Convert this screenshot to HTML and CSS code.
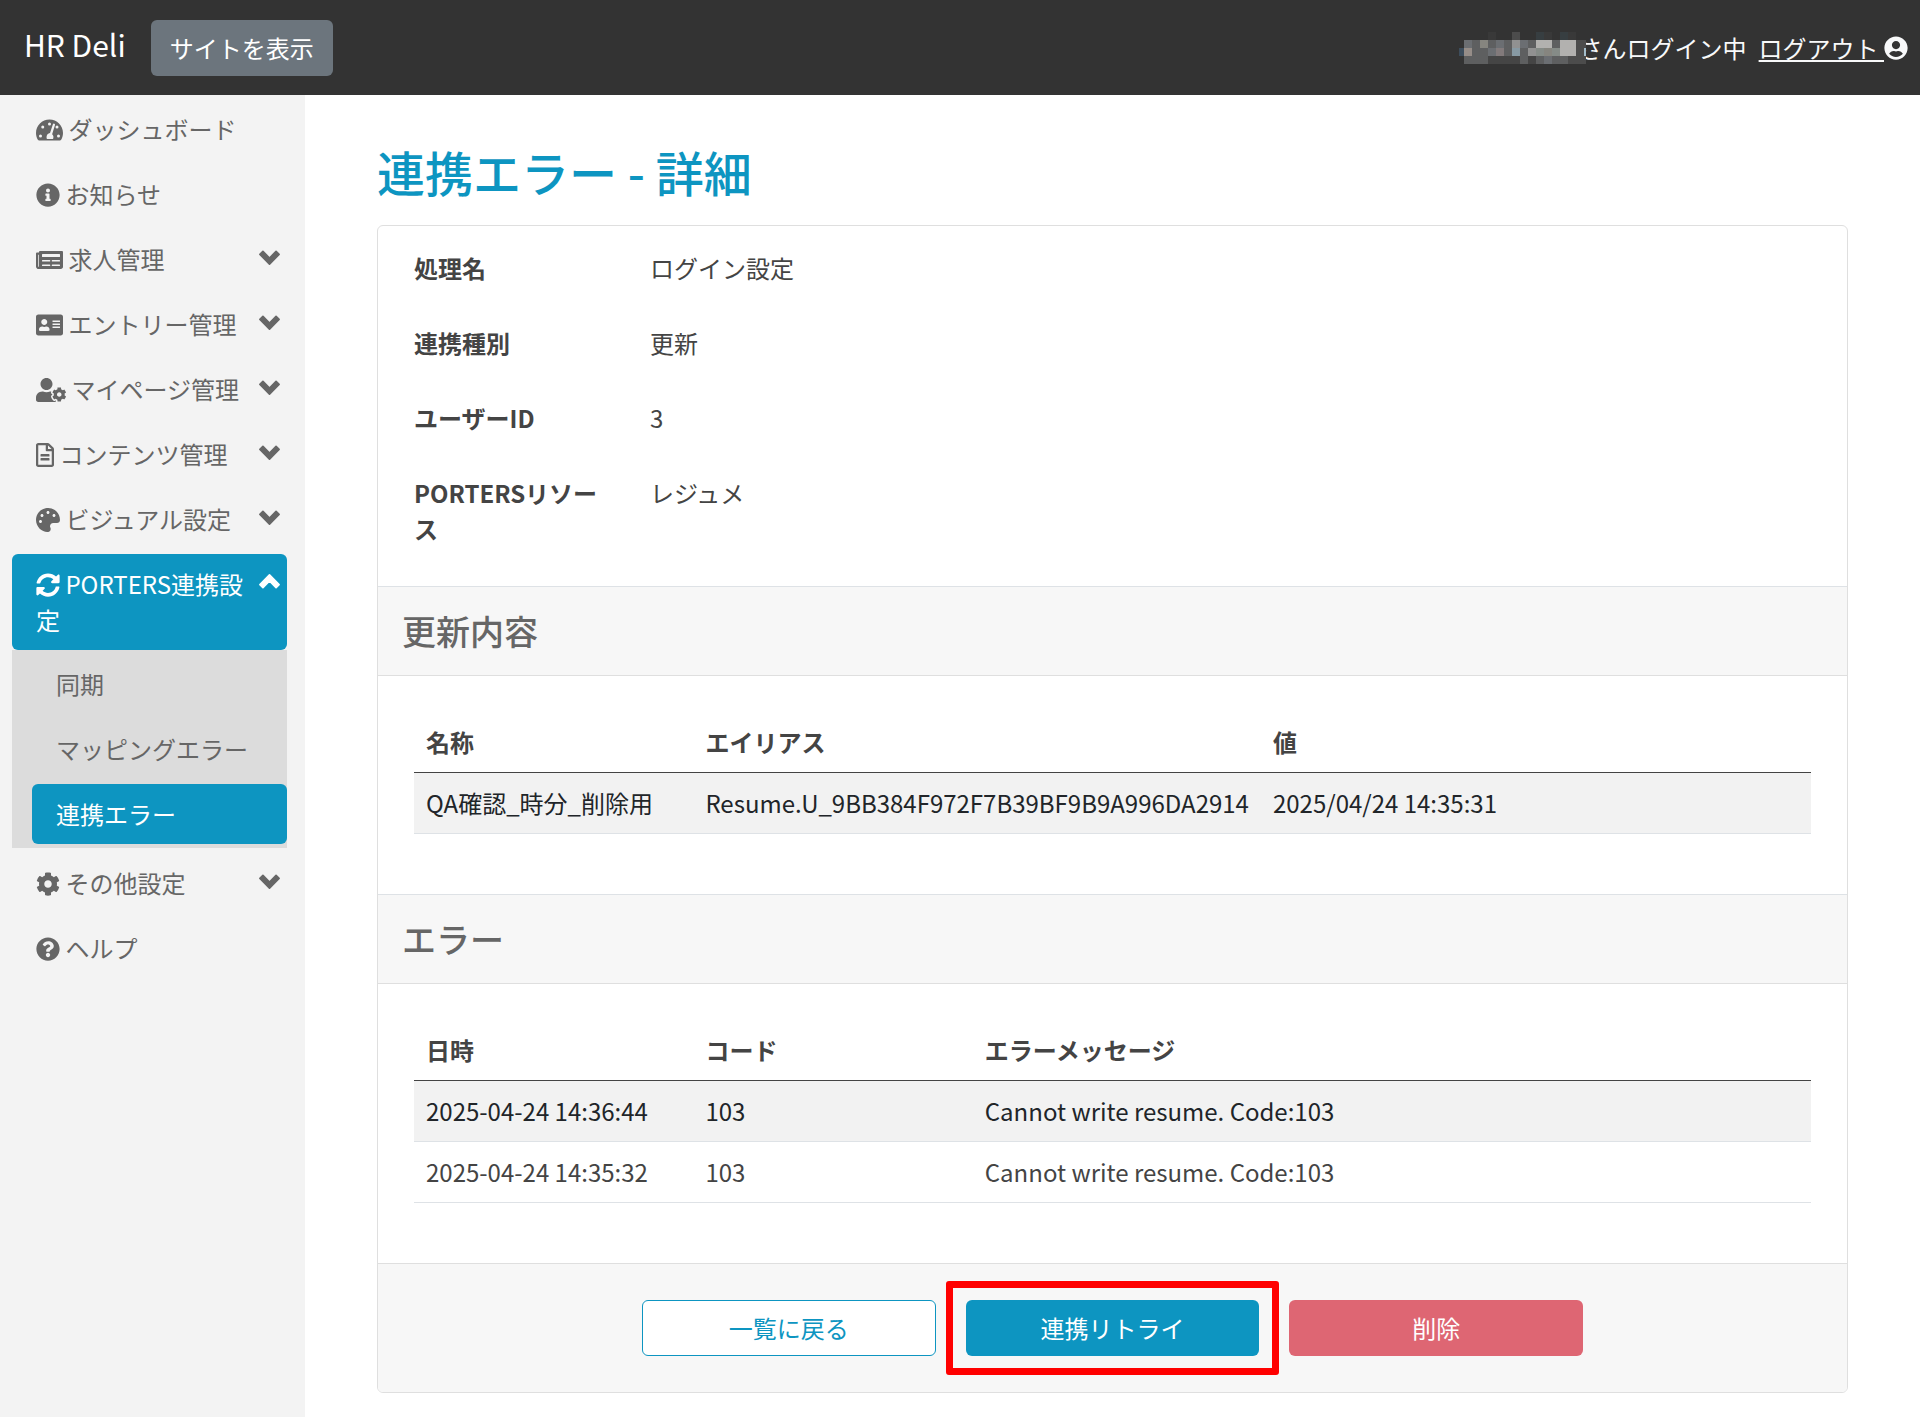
FILE: index.html
```html
<!DOCTYPE html>
<html lang="ja">

<head>
    <meta charset="UTF-8">
    <meta name="viewport" content="width=device-width, initial-scale=1.0">
    <title>連携エラー - 詳細 | HR Deli</title>
    <link rel="stylesheet" href="styles.css">
</head>

<body>
    <!-- icon sprite -->
    <svg class="sprite" aria-hidden="true">
        <symbol id="i-dashboard" viewBox="0 0 576 512"><path fill-rule="evenodd" d="M288 32C128.940 32 0 160.940 0 320c0 52.800 14.250 102.260 39.060 144.800 5.610 9.620 16.300 15.200 27.440 15.200h443c11.140 0 21.830-5.580 27.440-15.200C561.750 422.260 576 372.800 576 320c0-159.060-128.940-288-288-288zM288 96a32 32 0 1 0 0 64 32 32 0 1 0 0-64zM144 160a32 32 0 1 0 0 64 32 32 0 1 0 0-64zM96 352a32 32 0 1 0 0 64 32 32 0 1 0 0-64zM448 160a32 32 0 1 0 0 64 32 32 0 1 0 0-64zM480 352a32 32 0 1 0 0 64 32 32 0 1 0 0-64zM359 137c4-13 17-20 30-16s20 17 16 30l-61 193c29 23 36 63 19 104H233c-22-56 9-120 66-127z"/></symbol>
        <symbol id="i-info" viewBox="0 0 512 512"><path d="M256 8C119.043 8 8 119.083 8 256c0 136.997 111.043 248 248 248s248-111.003 248-248C504 119.083 392.957 8 256 8zm0 110c23.196 0 42 18.804 42 42s-18.804 42-42 42-42-18.804-42-42 18.804-42 42-42zm56 254c0 6.627-5.373 12-12 12h-88c-6.627 0-12-5.373-12-12v-24c0-6.627 5.373-12 12-12h12v-64h-12c-6.627 0-12-5.373-12-12v-24c0-6.627 5.373-12 12-12h64c6.627 0 12 5.373 12 12v100h12c6.627 0 12 5.373 12 12v24z"/></symbol>
        <symbol id="i-news" viewBox="0 0 576 512"><path d="M552 64H88c-13.255 0-24 10.745-24 24v8H24c-13.255 0-24 10.745-24 24v272c0 30.928 25.072 56 56 56h472c26.510 0 48-21.490 48-48V88c0-13.255-10.745-24-24-24zM56 400a8 8 0 0 1-8-8V144h16v248a8 8 0 0 1-8 8zm236-16H140c-6.627 0-12-5.373-12-12v-8c0-6.627 5.373-12 12-12h152c6.627 0 12 5.373 12 12v8c0 6.627-5.373 12-12 12zm208 0H348c-6.627 0-12-5.373-12-12v-8c0-6.627 5.373-12 12-12h152c6.627 0 12 5.373 12 12v8c0 6.627-5.373 12-12 12zm-208-96H140c-6.627 0-12-5.373-12-12v-8c0-6.627 5.373-12 12-12h152c6.627 0 12 5.373 12 12v8c0 6.627-5.373 12-12 12zm208 0H348c-6.627 0-12-5.373-12-12v-8c0-6.627 5.373-12 12-12h152c6.627 0 12 5.373 12 12v8c0 6.627-5.373 12-12 12zm0-96H140c-6.627 0-12-5.373-12-12v-40c0-6.627 5.373-12 12-12h360c6.627 0 12 5.373 12 12v40c0 6.627-5.373 12-12 12z"/></symbol>
        <symbol id="i-card" viewBox="0 0 576 512"><path d="M528 32H48C21.500 32 0 53.500 0 80v352c0 26.500 21.500 48 48 48h480c26.500 0 48-21.500 48-48V80c0-26.500-21.500-48-48-48zm-352 96c35.300 0 64 28.700 64 64s-28.700 64-64 64-64-28.700-64-64 28.700-64 64-64zm112 236.800c0 10.600-10 19.200-22.400 19.200H86.400C74 384 64 375.400 64 364.800v-19.200c0-31.800 30.100-57.600 67.200-57.600h5c12.300 5.100 25.700 8 39.800 8s27.600-2.900 39.800-8h5c37.100 0 67.200 25.800 67.200 57.600v19.200zM512 312c0 4.400-3.600 8-8 8H360c-4.400 0-8-3.600-8-8v-16c0-4.400 3.600-8 8-8h144c4.400 0 8 3.600 8 8v16zm0-64c0 4.400-3.600 8-8 8H360c-4.400 0-8-3.600-8-8v-16c0-4.400 3.600-8 8-8h144c4.400 0 8 3.600 8 8v16zm0-64c0 4.400-3.600 8-8 8H360c-4.400 0-8-3.600-8-8v-16c0-4.400 3.600-8 8-8h144c4.400 0 8 3.600 8 8v16z"/></symbol>
        <symbol id="i-user-cog" viewBox="0 0 640 512"><path d="M610.500 373.300c2.600-14.100 2.600-28.500 0-42.600l25.800-14.900c3-1.700 4.300-5.200 3.300-8.500-6.700-21.600-18.200-41.200-33.200-57.400-2.300-2.500-6-3.100-9-1.400l-25.800 14.900c-10.900-9.300-23.400-16.500-36.900-21.300v-29.800c0-3.400-2.400-6.400-5.700-7.100-22.300-5-45-4.800-66.200 0-3.300.7-5.700 3.700-5.700 7.100v29.800c-13.500 4.800-26 12-36.900 21.300l-25.800-14.900c-2.900-1.700-6.700-1.100-9 1.400-15 16.200-26.500 35.800-33.200 57.400-1 3.300.4 6.800 3.300 8.500l25.800 14.900c-2.600 14.100-2.600 28.500 0 42.600l-25.800 14.900c-3 1.700-4.300 5.200-3.300 8.500 6.700 21.600 18.200 41.100 33.200 57.400 2.300 2.500 6 3.100 9 1.400l25.800-14.900c10.900 9.300 23.400 16.500 36.900 21.300v29.800c0 3.400 2.400 6.400 5.700 7.100 22.300 5 45 4.800 66.200 0 3.300-.7 5.700-3.700 5.700-7.100v-29.800c13.500-4.800 26-12 36.900-21.300l25.800 14.900c2.900 1.700 6.700 1.100 9-1.400 15-16.200 26.500-35.800 33.200-57.400 1-3.300-.4-6.800-3.300-8.500l-25.800-14.900zM496 400.500c-26.800 0-48.500-21.800-48.500-48.500s21.800-48.500 48.500-48.500 48.500 21.800 48.500 48.500-21.700 48.500-48.500 48.500zM224 256c70.700 0 128-57.300 128-128S294.700 0 224 0 96 57.300 96 128s57.300 128 128 128zm201.200 226.500c-2.300-1.200-4.600-2.600-6.800-3.900l-7.900 4.600c-6 3.400-12.800 5.300-19.600 5.300-10.900 0-21.400-4.600-28.900-12.600-18.300-19.800-32.300-43.900-40.200-69.600-5.500-17.700 1.900-36.400 17.900-45.700l7.900-4.600c-.1-2.600-.1-5.200 0-7.800l-7.900-4.600c-16-9.200-23.400-28-17.900-45.700.9-2.900 2.200-5.800 3.200-8.700-3.800-.3-7.500-1.200-11.400-1.200h-16.700c-22.200 10.200-46.900 16-72.900 16s-50.600-5.800-72.900-16h-16.700C60.200 288 0 348.200 0 422.400V464c0 26.500 21.500 48 48 48h352c10.100 0 19.500-3.200 27.200-8.500-1.200-3.800-2-7.700-2-11.800v-9.200z"/></symbol>
        <symbol id="i-file" viewBox="0 0 384 512"><path d="M288 248v28c0 6.600-5.400 12-12 12H108c-6.600 0-12-5.400-12-12v-28c0-6.600 5.400-12 12-12h168c6.600 0 12 5.400 12 12zm-12 72H108c-6.600 0-12 5.400-12 12v28c0 6.600 5.400 12 12 12h168c6.600 0 12-5.400 12-12v-28c0-6.600-5.400-12-12-12zm108-188.100V464c0 26.500-21.500 48-48 48H48c-26.500 0-48-21.500-48-48V48C0 21.500 21.500 0 48 0h204.100C264.800 0 277 5.100 286 14.100L369.900 98c9 8.900 14.100 21.200 14.100 33.900zm-128-80V128h76.100L256 51.900zM336 464V176H232c-13.300 0-24-10.700-24-24V48H48v416h288z"/></symbol>
        <symbol id="i-palette" viewBox="0 0 512 512"><path d="M204.300 5C104.900 24.400 24.800 104.300 5.200 203.400c-37 187 131.700 326.400 258.800 306.700 41.200-6.400 61.400-54.600 42.500-91.700-23.100-45.400 9.900-98.400 60.900-98.400h79.700c35.800 0 64.800-29.600 64.900-65.300C511.500 97.100 368.100-26.900 204.300 5zM96 320c-17.700 0-32-14.300-32-32s14.300-32 32-32 32 14.300 32 32-14.300 32-32 32zm32-128c-17.700 0-32-14.300-32-32s14.300-32 32-32 32 14.300 32 32-14.300 32-32 32zm128-64c-17.700 0-32-14.300-32-32s14.300-32 32-32 32 14.300 32 32-14.300 32-32 32zm128 64c-17.700 0-32-14.300-32-32s14.300-32 32-32 32 14.300 32 32-14.300 32-32 32z"/></symbol>
        <symbol id="i-sync" viewBox="0 0 512 512"><path d="M370.720 133.280C339.458 104.008 298.888 87.962 255.848 88c-77.458.068-144.328 53.178-162.791 126.850-1.344 5.363-6.122 9.150-11.651 9.150H24.103c-7.498 0-13.194-6.807-11.807-14.176C33.933 94.924 134.813 8 256 8c66.448 0 126.791 26.136 171.315 68.685L463.030 40.970C478.149 25.851 504 36.559 504 57.941V192c0 13.255-10.745 24-24 24H345.941c-21.382 0-32.090-25.851-16.971-40.971l41.750-41.749zM32 296h134.059c21.382 0 32.090 25.851 16.971 40.971l-41.750 41.750c31.262 29.273 71.835 45.319 114.876 45.280 77.418-.07 144.315-53.144 162.787-126.849 1.344-5.363 6.122-9.150 11.651-9.150h57.304c7.498 0 13.194 6.807 11.807 14.176C478.067 417.076 377.187 504 256 504c-66.448 0-126.791-26.136-171.315-68.685L48.970 471.030C33.851 486.149 8 475.441 8 454.059V320c0-13.255 10.745-24 24-24z"/></symbol>
        <symbol id="i-cog" viewBox="0 0 512 512"><path d="M487.400 315.700l-42.600-24.600c4.300-23.200 4.300-47 0-70.200l42.600-24.600c4.900-2.800 7.100-8.600 5.500-14-11.100-35.600-30-67.800-54.700-94.600-3.800-4.100-10-5.100-14.800-2.300L380.800 110c-17.900-15.400-38.500-27.300-60.800-35.100V25.800c0-5.600-3.900-10.500-9.400-11.700-36.700-8.200-74.300-7.800-109.200 0-5.500 1.200-9.400 6.100-9.400 11.700V75c-22.200 7.900-42.800 19.800-60.800 35.100L88.700 85.500c-4.900-2.800-11-1.900-14.800 2.300-24.700 26.700-43.600 58.900-54.700 94.600-1.700 5.400.6 11.200 5.500 14L67.300 221c-4.300 23.200-4.300 47 0 70.200l-42.600 24.600c-4.900 2.800-7.100 8.600-5.500 14 11.100 35.600 30 67.800 54.700 94.600 3.800 4.100 10 5.100 14.800 2.300l42.600-24.600c17.900 15.400 38.500 27.300 60.800 35.100v49.200c0 5.600 3.900 10.500 9.400 11.700 36.700 8.200 74.300 7.800 109.200 0 5.500-1.200 9.400-6.100 9.400-11.700v-49.200c22.200-7.900 42.800-19.800 60.800-35.100l42.600 24.600c4.900 2.800 11 1.900 14.800-2.300 24.700-26.700 43.600-58.900 54.700-94.600 1.500-5.500-.7-11.300-5.600-14.100zM256 336c-44.100 0-80-35.900-80-80s35.900-80 80-80 80 35.900 80 80-35.900 80-80 80z"/></symbol>
        <symbol id="i-question" viewBox="0 0 512 512"><path d="M504 256c0 136.997-111.043 248-248 248S8 392.997 8 256C8 119.083 119.043 8 256 8s248 111.083 248 248zM262.655 90c-54.497 0-89.255 22.957-116.549 63.758-3.536 5.286-2.353 12.415 2.715 16.258l34.699 26.310c5.205 3.947 12.621 3.008 16.665-2.122 17.864-22.658 30.113-35.797 57.303-35.797 20.429 0 45.698 13.148 45.698 32.958 0 14.976-12.363 22.667-32.534 33.976C247.128 238.528 216 254.941 216 296v4c0 6.627 5.373 12 12 12h56c6.627 0 12-5.373 12-12v-1.333c0-28.462 83.186-29.647 83.186-106.667 0-58.002-60.165-102-116.531-102zM256 338c-25.365 0-46 20.635-46 46 0 25.364 20.635 46 46 46s46-20.636 46-46c0-25.365-20.635-46-46-46z"/></symbol>
        <symbol id="i-user" viewBox="0 0 496 512"><path d="M248 8C111 8 0 119 0 256s111 248 248 248 248-111 248-248S385 8 248 8zm0 96c48.600 0 88 39.400 88 88s-39.400 88-88 88-88-39.400-88-88 39.400-88 88-88zm0 344c-58.700 0-111.300-26.600-146.500-68.200 18.800-35.400 55.600-59.800 98.500-59.800 2.400 0 4.800.4 7.100 1.100 13 4.200 26.600 6.900 40.900 6.900 14.300 0 28-2.700 40.900-6.900 2.300-.7 4.700-1.100 7.100-1.100 42.900 0 79.700 24.400 98.500 59.800C359.300 421.400 306.700 448 248 448z"/></symbol>
        <symbol id="i-chevron" viewBox="0 0 448 512"><path stroke="currentColor" stroke-width="36" stroke-linejoin="round" d="M224 406L20 202l64-64 140 140 140-140 64 64z"/></symbol>
    </svg>

    <header class="topbar">
        <a class="brand" href="#">HR Deli</a>
        <a class="btn btn-secondary" href="#">サイトを表示</a>
        <div class="account">
            <!-- hidden user name -->
            <svg class="mosaic" viewBox="0 0 127 32" aria-hidden="true">
                <path fill="#5e5f60" d="M5 8h122v24H5z"/>
                <path fill="#3d4d5c" d="M0 16h5v8H0z"/>
                <path fill="#393939" d="M29 0h8v8h-8zM85 0h8v8h-8zM109 0h8v8h-8z"/>
                <path fill="#4c4c4c" d="M53 0h8v8h-8zM69 16h8v8h-8zM117 8h10v8h-10zM117 16h8v8h-8zM109 24h18v8h-18z"/>
                <path fill="#373e41" d="M77 0h8v8h-8zM101 0h8v8h-8z"/>
                <path fill="#6b6e72" d="M5 8h8v8H5zM37 8h8v8h-8zM61 8h8v8h-8zM29 16h8v8h-8zM85 24h8v8h-8z"/>
                <path fill="#454545" d="M29 24h32v8H29zM69 24h8v8h-8z"/>
                <path fill="#86857f" d="M21 8h8v8h-8zM85 16h8v8h-8z"/>
                <path fill="#919191" d="M53 8h8v8h-8zM69 16h8v8h-8z"/>
                <path fill="#968d88" d="M5 16h8v8H5z"/>
                <path fill="#827a7b" d="M37 16h8v8h-8z"/>
                <path fill="#8799a3" d="M53 16h8v8h-8z"/>
                <path fill="#b2b1af" d="M77 8h16v8H77zM101 8h16v8h-16zM101 16h16v8h-16z"/>
                <path fill="#858b87" d="M77 16h8v8h-8zM93 16h8v8h-8z"/>
                <path fill="#a4bdca" d="M125 16h2v8h-2z"/>
            </svg><span class="account-name">さんログイン中</span>
            <a class="logout" href="#">ログアウト&nbsp;</a><svg class="icon icon-user"><use href="#i-user"/></svg>
        </div>
    </header>

    <div class="layout">
        <nav class="sidebar">
            <ul class="menu">
                <li><a class="menu-link" href="#"><span class="menu-label"><svg class="icon icon-wide"><use href="#i-dashboard"/></svg> ダッシュボード</span></a></li>
                <li><a class="menu-link" href="#"><span class="menu-label"><svg class="icon"><use href="#i-info"/></svg> お知らせ</span></a></li>
                <li><a class="menu-link" href="#"><span class="menu-label"><svg class="icon icon-wide"><use href="#i-news"/></svg> 求人管理</span><svg class="chevron"><use href="#i-chevron"/></svg></a></li>
                <li><a class="menu-link" href="#"><span class="menu-label"><svg class="icon icon-wide"><use href="#i-card"/></svg> エントリー管理</span><svg class="chevron"><use href="#i-chevron"/></svg></a></li>
                <li><a class="menu-link" href="#"><span class="menu-label"><svg class="icon icon-xwide"><use href="#i-user-cog"/></svg> マイページ管理</span><svg class="chevron"><use href="#i-chevron"/></svg></a></li>
                <li><a class="menu-link" href="#"><span class="menu-label"><svg class="icon icon-narrow"><use href="#i-file"/></svg> コンテンツ管理</span><svg class="chevron"><use href="#i-chevron"/></svg></a></li>
                <li><a class="menu-link" href="#"><span class="menu-label"><svg class="icon"><use href="#i-palette"/></svg> ビジュアル設定</span><svg class="chevron"><use href="#i-chevron"/></svg></a></li>
                <li>
                    <a class="menu-link active" href="#"><span class="menu-label"><svg class="icon"><use href="#i-sync"/></svg> PORTERS連携設定</span><svg class="chevron chevron-up"><use href="#i-chevron"/></svg></a>
                    <ul class="submenu">
                        <li><a class="menu-link" href="#">同期</a></li>
                        <li><a class="menu-link" href="#">マッピングエラー</a></li>
                        <li><a class="menu-link active" href="#">連携エラー</a></li>
                    </ul>
                </li>
                <li><a class="menu-link" href="#"><span class="menu-label"><svg class="icon"><use href="#i-cog"/></svg> その他設定</span><svg class="chevron"><use href="#i-chevron"/></svg></a></li>
                <li><a class="menu-link" href="#"><span class="menu-label"><svg class="icon"><use href="#i-question"/></svg> ヘルプ</span></a></li>
            </ul>
        </nav>

        <main class="content">
            <h1>連携エラー - 詳細</h1>

            <div class="card">
                <dl class="details">
                    <dt>処理名</dt>
                    <dd>ログイン設定</dd>
                    <dt>連携種別</dt>
                    <dd>更新</dd>
                    <dt>ユーザーID</dt>
                    <dd>3</dd>
                    <dt>PORTERSリソース</dt>
                    <dd>レジュメ</dd>
                </dl>

                <h2 class="card-heading">更新内容</h2>
                <div class="card-body">
                    <table>
                        <thead>
                            <tr>
                                <th class="col-fifth">名称</th>
                                <th class="col-fifth">エイリアス</th>
                                <th>値</th>
                            </tr>
                        </thead>
                        <tbody>
                            <tr>
                                <td>QA確認_時分_削除用</td>
                                <td>Resume.U_9BB384F972F7B39BF9B9A996DA2914</td>
                                <td>2025/04/24 14:35:31</td>
                            </tr>
                        </tbody>
                    </table>
                </div>

                <h2 class="card-heading">エラー</h2>
                <div class="card-body">
                    <table>
                        <thead>
                            <tr>
                                <th class="col-fifth">日時</th>
                                <th class="col-fifth">コード</th>
                                <th>エラーメッセージ</th>
                            </tr>
                        </thead>
                        <tbody>
                            <tr>
                                <td>2025-04-24 14:36:44</td>
                                <td>103</td>
                                <td>Cannot write resume. Code:103</td>
                            </tr>
                            <tr>
                                <td>2025-04-24 14:35:32</td>
                                <td>103</td>
                                <td>Cannot write resume. Code:103</td>
                            </tr>
                        </tbody>
                    </table>
                </div>

                <div class="card-footer">
                    <a class="btn btn-outline" href="#">一覧に戻る</a>
                    <button type="button" class="btn btn-primary highlight">連携リトライ</button>
                    <button type="button" class="btn btn-danger">削除</button>
                </div>
            </div>
        </main>
    </div>
</body>

</html>
```
FILE: styles.css
```css
* {
    box-sizing: border-box;
}

body {
    margin: 0;
    min-height: 100vh;
    display: flex;
    flex-direction: column;
    font-family: "Noto Sans CJK JP", "Noto Sans", sans-serif;
    font-size: 24px;
    line-height: 36px;
    color: #444444;
    background-color: #ffffff;
}

ul {
    list-style: none;
    margin: 0;
    padding: 0;
}

a {
    text-decoration: none;
}

.sprite {
    display: none;
}

.icon {
    width: 24px;
    height: 24px;
    fill: currentColor;
    vertical-align: -3px;
}

.icon-narrow {
    width: 18px;
}

.icon-wide {
    width: 27px;
}

.icon-xwide {
    width: 30px;
}

/* buttons */
.btn {
    display: inline-block;
    padding: 9px 18px;
    border: 1px solid transparent;
    border-radius: 6px;
    font-family: inherit;
    font-size: 24px;
    line-height: 36px;
    text-align: center;
    color: #ffffff;
    cursor: pointer;
}

.btn-secondary {
    background-color: #6c757d;
}

.btn-primary {
    background-color: #0d95c1;
}

.btn-danger {
    background-color: #de6673;
}

.btn-outline {
    background-color: #ffffff;
    border-color: #0d95c1;
    color: #0d95c1;
}

/* header */
.topbar {
    display: flex;
    align-items: center;
    gap: 25px;
    padding: 20px 12px 19px 24px;
    background-color: #333333;
    color: #f8f9fa;
}

.brand {
    padding-bottom: 9px;
    font-size: 30px;
    color: #ffffff;
}

.account {
    display: flex;
    align-items: center;
    margin-left: auto;
}

.mosaic {
    position: relative;
    z-index: 1;
    width: 127px;
    height: 32px;
    margin-right: -7px;
}

.logout {
    margin-left: 12px;
    color: #f8f9fa;
    text-decoration: underline;
}

/* layout */
.layout {
    display: flex;
    flex: 1;
}

.sidebar {
    flex: 0 0 305px;
    padding: 4px 18px 24px 12px;
    background-color: #f3f3f3;
}

.menu {
    display: flex;
    flex-direction: column;
    gap: 5px;
}

.menu-link {
    display: flex;
    padding: 12px 7px 12px 24px;
    border-radius: 6px;
    color: #666666;
}

.menu-label {
    flex: 1;
}

.menu-link.active {
    background-color: #0d95c1;
    color: #ffffff;
}

.submenu {
    display: flex;
    flex-direction: column;
    gap: 5px;
    padding: 4px 0 4px 20px;
    background-color: #dcdcdc;
}

.chevron {
    width: 21px;
    height: 24px;
    margin-top: 4px;
    fill: currentColor;
}

.chevron-up {
    transform: rotate(180deg);
}

.content {
    flex: 1;
    min-width: 0;
    padding: 47px 72px 24px;
}

h1 {
    margin: 0 0 25px;
    font-size: 48px;
    font-weight: 500;
    line-height: 58px;
    color: #0d95c1;
}

/* card */
.card {
    border: 1px solid #dfdfdf;
    border-radius: 6px;
    overflow: hidden;
}

.details {
    display: grid;
    grid-template-columns: 200px 1fr;
    gap: 39px 36px;
    margin: 0;
    padding: 24px 36px 39px;
}

dt {
    font-weight: bold;
}

dd {
    margin: 0;
}

.card-heading {
    margin: 0;
    padding: 24px;
    border-top: 1px solid #dee2e6;
    border-bottom: 1px solid #dfdfdf;
    background-color: #f7f7f7;
    font-size: 34px;
    font-weight: 500;
    line-height: 40px;
    color: #666666;
}

.card-body {
    padding: 36px 36px 60px;
}

table {
    width: 100%;
    border-collapse: collapse;
}

th,
td {
    padding: 12px;
    text-align: left;
    border-bottom: 1px solid #dee2e6;
}

th {
    border-bottom-color: #444444;
}

.col-fifth {
    width: 20%;
}

tbody tr:nth-child(odd) {
    background-color: #f2f2f2;
    color: #212529;
}

.card-footer {
    display: flex;
    justify-content: center;
    gap: 30px;
    padding: 36px 0;
    border-top: 1px solid #dfdfdf;
    background-color: #f7f7f7;
}

.card-footer .btn {
    flex: 0 0 20%;
}

.highlight {
    position: relative;
}

/* red frame around the retry button */
.highlight::after {
    content: "";
    position: absolute;
    inset: -20px -21px;
    border: 7px solid #ff0000;
    border-radius: 3px;
}
```
